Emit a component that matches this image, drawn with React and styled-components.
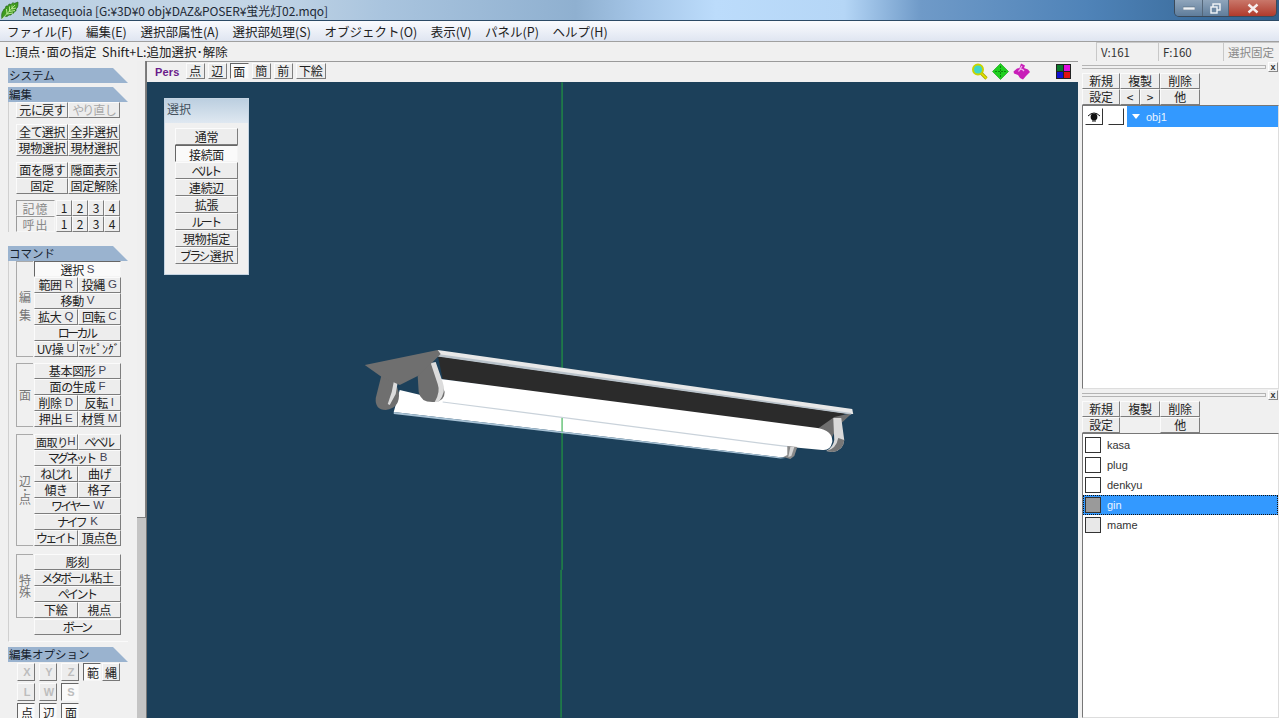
import React from 'react';
import styled, { createGlobalStyle } from 'styled-components';

const Global = createGlobalStyle`
  html, body { margin: 0; padding: 0; background: #f0f0f0; overflow: hidden; }
  * { box-sizing: border-box; }
`;
const JP = `"Noto Sans CJK JP", "Open Sans", sans-serif`;

const Win = styled.div`
  width: 1279px; height: 718px; display: flex; flex-direction: column; overflow: hidden;
  background: #f0f0f0; font-family: ${JP}; font-size: 12px; color: #222;
`;
const TitleBar = styled.div`
  height: 21px; flex: none; display: flex; align-items: center; padding-left: 1px; gap: 3px;
  border-bottom: 1px solid #2c4a66;
  background: linear-gradient(90deg, #b9cfe2 0, #c4d6e6 20%, #a9c4de 30%, #8fb0d0 45%, #a5c6e8 50%, #bcdcfb 56%, #b5d6f6 66%, #6f9ac8 72%, #4f83b8 85%, #2f5f8c 100%);
`;
const TitleText = styled.span`
  font-size: 12px; color: #1f2a36; white-space: nowrap; line-height: 19px; letter-spacing: -.1px;
`;
const Controls = styled.div`
  margin-left: auto; margin-right: 2px; display: flex; height: 17px; margin-top: -3px;
  border: 1px solid #3b4a5a; border-top: none; border-radius: 0 0 5px 5px; overflow: hidden;
`;
const Ctl = styled.div`
  width: ${p => p.$w}px; display: flex; align-items: center; justify-content: center;
  background: ${p => p.$bg}; border-right: 1px solid #55677a;
  &:last-child { border-right: none; }
`;
const MenuBar = styled.div`
  height: 21px; flex: none; display: flex; align-items: center; padding-left: 7px; gap: 13.6px;
  background: linear-gradient(#fafbfe, #dfe5f1); border-bottom: 1px solid #a0a0a0;
  font-size: 12.5px; color: #222;
`;
const MenuItem = styled.span` white-space: nowrap; `;
const StatusBar = styled.div`
  height: 19px; flex: none; display: flex; align-items: center; padding-left: 5px; background: #f0f0f0;
`;
const Hint = styled.span` font-size: 12.5px; color: #222; white-space: nowrap; `;
const Cell = styled.div`
  width: ${p => p.$w}px; height: 19px; flex: none; padding-left: 4px; line-height: 18px; font-size: 11.5px;
  border-left: 1px solid #c8c8c8; border-top: 1px solid #c8c8c8; white-space: nowrap;
  color: ${p => p.$dim ? '#888' : '#333'};
  &:first-of-type { margin-left: auto; }
`;
const Main = styled.div` flex: 1; display: flex; min-height: 0; `;
const LeftPanel = styled.div`
  width: 137px; flex: none; padding: 7px 0 0 8px; overflow: hidden; background: #f0f0f0;
`;
const Head = styled.div`
  width: 120px; height: 15px; background: #9ab3cf; color: #15202c; line-height: 15px; padding-left: 1px;
  font-size: 11.5px; white-space: nowrap;
  clip-path: polygon(0 0, 105px 0, 120px 15px, 0 15px);
`;
const HeadGap = styled.div` height: 4px; `;
const Section = styled.div`
  width: 120px; border-left: 1px solid #d0d0d0; padding-left: ${p => p.$pl ?? 7}px;
  padding-bottom: ${p => p.$pb ?? 0}px; margin-bottom: ${p => p.$mb ?? 0}px;
  border-bottom: ${p => p.$line ? '1px solid #fafafa' : 'none'};
`;
const Grid = styled.div`
  display: grid; grid-template-columns: repeat(${p => p.$cols}, 1fr); width: ${p => p.$w || 104}px;
  margin-bottom: ${p => p.$mb ?? 6}px;
`;
const Btn = styled.div`
  height: ${p => p.$h || 16}px; grid-column: span ${p => p.$span || 1};
  display: flex; align-items: center; justify-content: center; white-space: pre; overflow: hidden;
  font-size: ${p => p.$fs || 12}px; line-height: 1; letter-spacing: -.3px;
  color: ${p => p.$off ? '#a8a8a8' : '#222'};
  background: ${p => p.$on ? '#fafafa' : '#ededed'};
  padding-top: ${p => p.$on ? 2 : 0}px;
  margin-top: ${p => p.$mt || 0}px;
  flex: ${p => p.$grow ? 1 : 'none'};
  border-style: solid; border-width: 1px;
  border-color: ${p => p.$on ? '#666 #f4f4f4 #f4f4f4 #666' : '#fbfbfb #7d7d7d #7d7d7d #fbfbfb'};
`;
const Kata = styled.span` letter-spacing: -2.6px; margin-right: 2px; `;
const Hira = styled.span` letter-spacing: -2px; margin-right: 1px; `;
const Key = styled.span` font-family: "Liberation Sans", sans-serif; font-size: 11.5px; color: #445; margin-left: ${p => p.$ml ?? 3}px; letter-spacing: 0; `;
const MemRow = styled.div` display: flex; width: 104px; margin-bottom: ${p => p.$mb ?? 0}px; `;
const MemLabel = styled.div`
  width: 39px; height: 16px; text-align: center; line-height: 15px; color: #888; flex: none; margin-right: 1px;
  border: 1px solid; border-color: #9a9a9a #f6f6f6 #f6f6f6 #9a9a9a; letter-spacing: 1px; font-size: 12px;
`;
const Cmd = styled.div` display: flex; margin-bottom: ${p => p.$mb ?? 6}px; `;
const Side = styled.div`
  width: 17px; flex: none; margin-left: 7px; margin-right: 1px; border: 1px solid #aaa; border-right: none;
  display: flex; align-items: center; justify-content: center;
  writing-mode: vertical-rl; color: #777; font-size: 12px; letter-spacing: ${p => p.$ls || 0}px; height: ${p => p.$h}px;
`;
const CmdGrid = styled(Grid)` width: 87px; margin: 0; grid-template-columns: 1fr 1fr; grid-auto-rows: 16px; `;
const OptRow = styled.div` display: flex; gap: 4px; padding-left: 9px; margin-bottom: 2px; margin-top: ${p => p.$mt || 0}px; `;
const Opt = styled.div`
  width: 18px; height: 18px; flex: none; display: flex; align-items: center; justify-content: center;
  margin-left: ${p => p.$ml || 0}px;
  padding-left: ${p => (p.$lat || p.$on) ? 2 : 0}px;
  font-size: ${p => p.$lat ? 11 : 12}px; font-weight: ${p => p.$lat ? 700 : 400};
  font-family: ${p => p.$lat ? '"Liberation Sans", sans-serif' : JP};
  color: ${p => p.$lat ? '#bdbdbd' : '#222'};
  background: ${p => p.$on ? '#fafafa' : '#ededed'};
  border: 1px solid;
  border-color: ${p => p.$on ? '#666 #f6f6f6 #f6f6f6 #666' : '#fbfbfb #777 #777 #fbfbfb'};
`;
const Scroll = styled.div`
  width: 9px; flex: none; background: #c4c4c4; display: flex; flex-direction: column;
`;
const Thumb = styled.div`
  height: 457px; background: #efefef; border-right: 1px solid #7f7f7f; border-bottom: 1px solid #7f7f7f;
`;
const View = styled.div` width: 932px; flex: none; display: flex; flex-direction: column; border-left: 1px solid #777; `;
const Tools = styled.div`
  height: 21px; flex: none; display: flex; align-items: center; padding: 0 0 2px 8px; background: #f0f0f0; border-top: 1px solid #9a9a9a;
`;
const Pers = styled.span`
  font-family: "Liberation Sans", sans-serif; font-weight: 700; font-size: 11px; color: #6a1b8a; margin-right: 6px; letter-spacing: .2px; padding-top: 2px;
`;
const ToolBtn = styled(Btn)` width: ${p => p.$w || 19}px; height: 16px; margin-right: 3px; `;
const ToolIcons = styled.div` margin-left: auto; display: flex; align-items: center; height: 20px; gap: 4px; padding-right: 7px; `;
const Canvas = styled.div` flex: 1; position: relative; background: #1c405a; overflow: hidden; `;
const Model = styled.svg` position: absolute; inset: 0; width: 100%; height: 100%; `;
const Float = styled.div`
  position: absolute; left: 17px; top: 16px; width: 85px; height: 177px; background: #f0f0f0;
  border: 1px solid #c5d4e2;
`;
const FloatHead = styled.div`
  height: 24px; padding: 1px 0 0 2px; font-size: 12px; color: #44505c;
  background: linear-gradient(#bccfe0, #dfe8f1);
`;
const FloatList = styled.div` padding: 5px 10px 0 10px; display: flex; flex-direction: column; `;
const Gutter = styled.div` width: 4px; flex: none; background: #f0f0f0; `;
const Right = styled.div` flex: 1; display: flex; flex-direction: column; min-width: 0; background: #f0f0f0; `;
const Grip = styled.div`
  height: 10px; flex: none; margin: 1px 0 1px; display: flex; align-items: center;
`;
const GripLine = styled.div` flex: 1; height: 4px; margin-right: 2px; border: 1px solid #b4b4b4; border-left: none; `;
const Close = styled.div`
  width: 10px; height: 10px; margin-right: 1px; font: 700 9px/8px "Liberation Sans", sans-serif; text-align: center; color: #333; border: 1px solid; border-color: #fff #888 #888 #fff;
`;
const RGrid = styled.div` display: grid; grid-template-columns: 38px 20px 20px 40px; width: 118px; `;
const Blank = styled.div` grid-column: span 2; `;
const List = styled.div`
  background: #fff; border: 1px solid; border-color: #777 #ddd #ddd #777; overflow: hidden;
  height: ${p => p.$h}px; flex: ${p => p.$h ? 'none' : 1}; padding-top: ${p => p.$pt || 0}px;
`;
const ObjRow = styled.div` display: flex; align-items: center; padding-left: 2px; height: 21px; `;
const Eye = styled.div`
  width: 18px; height: 17px; margin-right: 5px; display: flex; align-items: center; justify-content: center;
  border: 1px solid; border-color: #fff #333 #333 #fff;
`;
const Lock = styled.div`
  width: 16px; height: 17px; margin-right: 3px; border: 1px solid; border-color: #fff #333 #333 #fff;
`;
const ObjName = styled.div`
  flex: 1; height: 21px; background: #3399ff; color: #eaf4ff; display: flex; align-items: center; padding-left: 5px; gap: 6px;
  font-family: "Liberation Sans", sans-serif; font-size: 11px;
`;
const MatRow = styled.div`
  height: 20px; display: flex; align-items: center; padding-left: 2px; gap: 6px;
  font: 11px "Liberation Sans", sans-serif; color: ${p => p.$sel ? '#eaf4ff' : '#333'};
  background: ${p => p.$sel ? '#3399ff' : 'transparent'};
  outline: ${p => p.$sel ? '1px dotted #111' : 'none'}; outline-offset: -1px;
`;
const Swatch = styled.div`
  width: 16px; height: 16px; flex: none; border: 1px solid #333; background: ${p => p.$c};
`;

// MS UI Gothic has narrow kana: tighten runs of kana so the labels keep their width.
const Txt = ({ children }) => String(children).split(/([ァ-ヶー]+|[ぁ-ん]+)/).filter(Boolean).map((s, i) =>
  /^[ァ-ヶー]/.test(s) ? <Kata key={i}>{s}</Kata> : /^[ぁ-ん]/.test(s) ? <Hira key={i}>{s}</Hira> : <React.Fragment key={i}>{s}</React.Fragment>
);
const K = ({ t, k, ml }) => <><Txt>{t}</Txt>{k && <Key $ml={ml}>{k}</Key>}</>;

const menu = ['ファイル(F)', '編集(E)', '選択部属性(A)', '選択部処理(S)', 'オブジェクト(O)', '表示(V)', 'パネル(P)', 'ヘルプ(H)'];
const cmd1 = [['選択', 'S', 2, 1], ['範囲', 'R'], ['投縄', 'G'], ['移動', 'V', 2], ['拡大', 'Q'], ['回転', 'C'], ['ローカル', '', 2], ['UV操', 'U'], ['ﾏｯﾋﾟﾝｸﾞ', '']];
const cmd2 = [['基本図形', 'P', 2], ['面の生成', 'F', 2], ['削除', 'D'], ['反転', 'I'], ['押出', 'E'], ['材質', 'M']];
const cmd3 = [['面取り', 'H', 1, 0, 11, 0], ['ベベル', ''], ['マグネット', 'B', 2], ['ねじれ', ''], ['曲げ', ''], ['傾き', ''], ['格子', ''], ['ワイヤー', 'W', 2], ['ナイフ', 'K', 2], ['ウェイト', ''], ['頂点色', '']];
const cmd4 = [['彫刻', '', 2], ['メタボール粘土', '', 2], ['ペイント', '', 2], ['下絵', ''], ['視点', '']];
const sel = ['通常', '接続面', 'ベルト', '連続辺', '拡張', 'ルート', '現物指定', 'ブラシ選択'];
const mats = [['kasa', '#fff'], ['plug', '#fff'], ['denkyu', '#fff'], ['gin', '#9a9a9a', true], ['mame', '#e8e8e8']];

const CmdBtns = ({ items }) => items.map(([t, k, s, on, fs, ml]) => (
  <Btn key={t} $span={s} $on={on} $fs={fs}><K t={t} k={k} ml={ml} /></Btn>
));

const Logo = () => (
  <svg width="18" height="19" viewBox="0 0 18 19">
    <path d="M1 18 C0 14 1 11 2 10 L3 8 L4 8 L5 5 L7 5 L8 3 L10 3.5 L12 1.5 L13 2.5 L17 1 C17 4 17 6 16 7 L15 8 L15 10 L13 10.5 L13 12 L11 12.5 L10 14 L8 14 L6 15.5 L3 15 Z" fill="#3f9a1f" stroke="#1f5f10" strokeWidth=".6" />
    <path d="M1 18 L14 4 M6 13 L5.5 8 M8.5 10.5 L8.5 5.5 M11 8 L11 4.5 M6 13 L12 12 M8.5 10.5 L14 9.5 M11 8 L15 7" stroke="#c4ee9c" strokeWidth=".9" fill="none" />
  </svg>
);

const ModelArt = () => (
  <Model viewBox="146 82 932 636">
    <rect x="561" y="82" width="1" height="488" fill="#22a83c" />
    <rect x="560" y="570" width="1" height="148" fill="#22a83c" />
    {/* dark reflector */}
    <polygon points="437,355 848,412 818,429 700,415 600,402 442,379" fill="#2b2b2b" />
    {/* right bracket */}
    <polygon points="817,429 834,417 852,413 838,426 830,440" fill="#6f6f6f" />
    {/* lamp tubes */}
    <path d="M440,379 L817,428 Q833,431 832,442 Q830,451 822,450 L790,447 L788,456 Q785,458 778,457 L393,412 L399,390 L420,395 Z" fill="#fff" />
    <line x1="442" y1="402" x2="790" y2="447" stroke="#c9d2da" strokeWidth="1.2" />
    <rect x="561" y="418" width="1" height="16" fill="#22a83c" />
    <polygon points="393,412 778,457 785,458 780,458.5 393,414" fill="#a9c3d6" />
    {/* top strip */}
    <polygon points="437,350 852,409 853,414 850,414 437,356" fill="#e8e8e8" />
    <polygon points="437,354 851,413 851,414.5 437,356.5" fill="#b9c3cb" />
    {/* right leg */}
    <path d="M833,418 L841,418 L844,440 Q843,451 832,452 L826,451 Q833,447 834,440 Z" fill="#d9d9d9" />
    <path d="M838,438 L844,440 Q843,451 832,452 L826,451 Q836,449 838,438 Z" fill="#777" />
    {/* small leg */}
    <polygon points="787,446 797,447 794,456 790,459 783,457 787,455" fill="#8a8a8a" />
    <polygon points="790,447 794,447 791,456 788,457" fill="#d6d6d6" />
    {/* left back leg */}
    <path d="M417,376 L431,362 L436,370 L444,392 Q444,401 434,402 Q420,403 418,392 Z" fill="#6f6f6f" />
    <path d="M430,363 L435,362 L442,382 Q446,392 438,402 L434,402 Q440,392 437,384 Z" fill="#dcdcdc" />
    {/* left front leg */}
    <path d="M381,374 L394,380 L398,392 Q400,408 385,410 Q374,410 375,398 Z" fill="#6f6f6f" />
    <path d="M393,382 L397,382 L395,394 L389,405 L387,404 L391,392 Z" fill="#dcdcdc" />
    {/* top plate */}
    <polygon points="364,365 437,350 440,354 419,375 399,385 381,377" fill="#6f6f6f" />
  </Model>
);

export default function App() {
  return (
    <Win>
      <Global />
      <TitleBar>
        <Logo />
        <TitleText>Metasequoia [G:¥3D¥0 obj¥DAZ&POSER¥蛍光灯02.mqo]</TitleText>
        <Controls>
          <Ctl $w={28} $bg="linear-gradient(#8fa5bb,#5f7d9b)"><svg width="12" height="4"><rect width="12" height="3" y="1" fill="#eef2f6" stroke="#4a5b6c" strokeWidth=".5" /></svg></Ctl>
          <Ctl $w={26} $bg="linear-gradient(#8fa5bb,#5f7d9b)"><svg width="11" height="11" fill="none" stroke="#f2f5f8" strokeWidth="1.4"><rect x="3" y="1" width="7" height="6" /><rect x="1" y="4" width="6" height="6" fill="#6f8aa5" /></svg></Ctl>
          <Ctl $w={47} $bg="linear-gradient(#c9776a,#b03a2c)"><svg width="12" height="11" stroke="#f6eeee" strokeWidth="2.4"><path d="M1.5 1.5 L10.5 9.5 M10.5 1.5 L1.5 9.5" /></svg></Ctl>
        </Controls>
      </TitleBar>
      <MenuBar>{menu.map(m => <MenuItem key={m}>{m}</MenuItem>)}</MenuBar>
      <StatusBar>
        <Hint>L:頂点･面の指定&nbsp; Shift+L:追加選択･解除</Hint>
        <Cell $w={62}>V:161</Cell>
        <Cell $w={65}>F:160</Cell>
        <Cell $w={56} $dim>選択固定</Cell>
      </StatusBar>
      <Main>
        <LeftPanel>
          <Head>システム</Head>
          <HeadGap />
          <Head>編集</Head>
          <Section>
            <Grid $cols={2}><Btn><Txt>元に戻す</Txt></Btn><Btn $off><Txt>やり直し</Txt></Btn></Grid>
            <Grid $cols={2}><Btn><Txt>全て選択</Txt></Btn><Btn>全非選択</Btn><Btn>現物選択</Btn><Btn>現材選択</Btn></Grid>
            <Grid $cols={2}><Btn><Txt>面を隠す</Txt></Btn><Btn>隠面表示</Btn><Btn>固定</Btn><Btn>固定解除</Btn></Grid>
            <MemRow><MemLabel>記憶</MemLabel>{[1,2,3,4].map(n => <Btn key={n} $grow>{n}</Btn>)}</MemRow>
            <MemRow $mb={14}><MemLabel>呼出</MemLabel>{[1,2,3,4].map(n => <Btn key={n} $grow>{n}</Btn>)}</MemRow>
          </Section>
          <Head>コマンド</Head>
          <Section $pl={0} $pb={7} $mb={5} $line>
            <Cmd><Side $h={96} $ls={6}>編集</Side><CmdGrid $cols={2}><CmdBtns items={cmd1} /></CmdGrid></Cmd>
            <Cmd $mb={7}><Side $h={64}>面</Side><CmdGrid $cols={2}><CmdBtns items={cmd2} /></CmdGrid></Cmd>
            <Cmd $mb={8}><Side $h={112}>辺･点</Side><CmdGrid $cols={2}><CmdBtns items={cmd3} /></CmdGrid></Cmd>
            <Cmd $mb={0}><Side $h={64}>特殊</Side><CmdGrid $cols={2}><CmdBtns items={cmd4} /><Btn $span={2} $mt={1}><Txt>ボーン</Txt></Btn></CmdGrid></Cmd>
          </Section>
          <Head>編集オプション</Head>
          <OptRow $mt={1}>
            <Opt $lat>X</Opt><Opt $lat>Y</Opt><Opt $lat>Z</Opt>
            <Opt $on>範</Opt><Opt $ml={-3}>縄</Opt>
          </OptRow>
          <OptRow><Opt $lat>L</Opt><Opt $lat>W</Opt><Opt $lat $on>S</Opt></OptRow>
          <OptRow><Opt $on>点</Opt><Opt $on>辺</Opt><Opt $on>面</Opt></OptRow>
        </LeftPanel>
        <Scroll><Thumb /></Scroll>
        <View>
          <Tools>
            <Pers>Pers</Pers>
            <ToolBtn>点</ToolBtn><ToolBtn>辺</ToolBtn><ToolBtn $on>面</ToolBtn><ToolBtn>簡</ToolBtn><ToolBtn>前</ToolBtn><ToolBtn $w={30}>下絵</ToolBtn>
            <ToolIcons>
              <svg width="17" height="17" viewBox="0 0 17 17"><circle cx="7" cy="6.5" r="5" fill="#3fd6c8" stroke="#c8d400" strokeWidth="2" /><path d="M10.5 10.5 L15.5 15.5" stroke="#a8a800" strokeWidth="3.2" /><path d="M10.5 10.5 L15.5 15.5" stroke="#e6e600" strokeWidth="1.6" /></svg>
              <svg width="17" height="17" viewBox="0 0 17 17"><path d="M8.5 .5 L16.5 8.5 L8.5 16.5 L.5 8.5 Z" fill="#1fd01f" stroke="#0c9a0c" strokeWidth=".6" /><path d="M8.5 3 V14 M3 8.5 H14" stroke="#0c8a0c" strokeWidth="1" strokeDasharray="2 1" /></svg>
              <svg width="17" height="17" viewBox="0 0 17 17"><path d="M8 .5 L12 2.5 L11 5 L15 6.5 L17 9 L13 13 L10 16.5 L7 15 L5 12 L1 10.5 L.5 8.5 L4 5.5 L6.5 5 Z" fill="#c81eb8" /><path d="M5.5 8.5 Q8 4 11 8 M9 3 L7 6" stroke="#f0b0ec" strokeWidth="1.3" fill="none" /></svg>
              <svg width="15" height="15" viewBox="0 0 15 15" style={{ marginLeft: 22 }}><rect width="15" height="15" fill="#222" /><rect x="1" y="1" width="6" height="6" fill="#0a7a2a" /><rect x="8" y="1" width="6" height="6" fill="#e010e0" /><rect x="1" y="8" width="6" height="6" fill="#1010d0" /><rect x="8" y="8" width="6" height="6" fill="#e01010" /></svg>
            </ToolIcons>
          </Tools>
          <Canvas>
            <ModelArt />
            <Float>
              <FloatHead>選択</FloatHead>
              <FloatList>{sel.map((s, i) => <Btn key={s} $h={17} $on={i === 1}><Txt>{s}</Txt></Btn>)}</FloatList>
            </Float>
          </Canvas>
        </View>
        <Gutter />
        <Right>
          <Grip><GripLine /><Close>x</Close></Grip>
          <RGrid><Btn>新規</Btn><Btn $span={2}>複製</Btn><Btn>削除</Btn><Btn>設定</Btn><Btn>&lt;</Btn><Btn>&gt;</Btn><Btn>他</Btn></RGrid>
          <List $h={284}>
            <ObjRow>
              <Eye><svg width="14" height="12" viewBox="0 0 14 12"><path d="M1 5 Q7 -1 13 5" stroke="#111" fill="none" /><circle cx="7" cy="6" r="3.4" fill="#111" /><path d="M5 10 H9" stroke="#111" /></svg></Eye>
              <Lock />
              <ObjName><svg width="8" height="5"><path d="M0 0 H8 L4 5 Z" fill="#fff" /></svg>obj1</ObjName>
            </ObjRow>
          </List>
          <Grip><GripLine /><Close>x</Close></Grip>
          <RGrid><Btn>新規</Btn><Btn $span={2}>複製</Btn><Btn>削除</Btn><Btn>設定</Btn><Blank /><Btn>他</Btn></RGrid>
          <List $pt={1}>{mats.map(([n, c, s]) => <MatRow key={n} $sel={s}><Swatch $c={c} />{n}</MatRow>)}</List>
        </Right>
      </Main>
    </Win>
  );
}
